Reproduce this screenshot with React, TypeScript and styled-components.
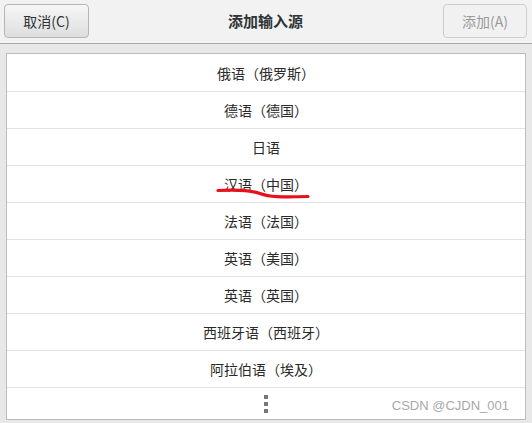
import React from "react";
import styled, { createGlobalStyle } from "styled-components";

const GlobalStyle = createGlobalStyle`
  html, body {
    margin: 0;
    padding: 0;
    background: #e8e8e8;
  }
  body {
    font-family: "Noto Sans CJK SC", "DejaVu Sans", sans-serif;
  }
`;

const Window = styled.div`
  width: 532px;
  height: 423px;
  display: flex;
  flex-direction: column;
  background: #e8e8e8;
  overflow: hidden;
  position: relative;
`;

const HeaderBar = styled.div`
  height: 44px;
  box-sizing: border-box;
  display: grid;
  grid-template-columns: 1fr auto 1fr;
  align-items: center;
  padding: 0 5px 0 4px;
  background: #f2f2f2;
  border-bottom: 1px solid #a8a8a8;
  flex-shrink: 0;
`;

const Title = styled.div`
  font-size: 15px;
  font-weight: bold;
  color: #2e3436;
  text-align: center;
  margin-top: -2px;
`;

const Button = styled.button<{ $disabled?: boolean }>`
  height: 34px;
  width: ${(p) => (p.$disabled ? "84px" : "85px")};
  box-sizing: border-box;
  border-radius: 4px;
  border: 1px solid ${(p) => (p.$disabled ? "#cdcdcd" : "#b6b6b6")};
  background: ${(p) =>
    p.$disabled ? "#f1f1f1" : "linear-gradient(#f6f6f6, #dedede)"};
  color: ${(p) => (p.$disabled ? "#9a9a9a" : "#2e3436")};
  font-family: "Noto Sans CJK SC", "DejaVu Sans", sans-serif;
  font-size: 14px;
  padding: 0;
  justify-self: ${(p) => (p.$disabled ? "end" : "start")};
  margin-top: -1px;
`;

const Body = styled.div`
  flex: 1;
  padding: 9px 6px 3px 6px;
  display: flex;
`;

const List = styled.div`
  flex: 1;
  background: #fff;
  border: 1px solid #bcbcbc;
  display: flex;
  flex-direction: column;
  position: relative;
`;

const Row = styled.div`
  height: 36px;
  border-bottom: 1px solid #e2e2e2;
  display: flex;
  align-items: center;
  justify-content: center;
  font-size: 14px;
  color: #2a2a2a;
  position: relative;
  &:first-child {
    height: 37px;
  }
`;

const MoreRow = styled.div`
  flex: 1;
  display: flex;
  align-items: center;
  justify-content: center;
`;

const Dots = styled.div`
  display: flex;
  flex-direction: column;
  gap: 3px;
  & > span {
    width: 4px;
    height: 4px;
    background: #777;
  }
`;

const Underline = styled.svg`
  position: absolute;
  left: 208px;
  top: 21px;
  pointer-events: none;
`;

const Watermark = styled.div`
  position: absolute;
  right: 16px;
  bottom: 6px;
  font-family: "Liberation Sans", Arial, sans-serif;
  font-size: 13px;
  color: #a8a8a8;
`;

const languages = [
  "俄语（俄罗斯）",
  "德语（德国）",
  "日语",
  "汉语（中国）",
  "法语（法国）",
  "英语（美国）",
  "英语（英国）",
  "西班牙语（西班牙）",
  "阿拉伯语（埃及）",
];

export default function App() {
  return (
    <>
      <GlobalStyle />
      <Window>
        <HeaderBar>
          <Button>取消(C)</Button>
          <Title>添加输入源</Title>
          <Button $disabled>添加(A)</Button>
        </HeaderBar>
        <Body>
          <List>
            {languages.map((lang) => (
              <Row key={lang}>
                {lang}
                {lang === "汉语（中国）" && (
                  <Underline width="104" height="14" viewBox="0 0 104 14">
                    <path
                      d="M3 3.5 C 20 2.5, 36 3.5, 45 6.5 C 54 10, 66 10.5, 93 9.5"
                      fill="none"
                      stroke="#e8101a"
                      strokeWidth="3.2"
                      strokeLinecap="round"
                    />
                  </Underline>
                )}
              </Row>
            ))}
            <MoreRow>
              <Dots>
                <span />
                <span />
                <span />
              </Dots>
            </MoreRow>
            <Watermark>CSDN @CJDN_001</Watermark>
          </List>
        </Body>
      </Window>
    </>
  );
}
